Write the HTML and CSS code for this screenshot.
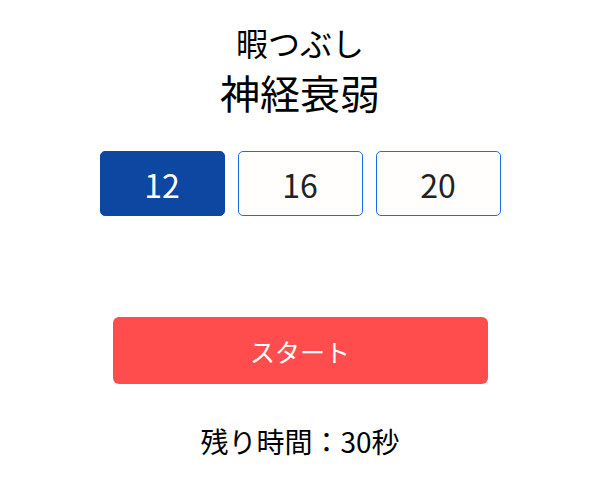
FILE: index.html
```html
<!DOCTYPE html>
<html lang="ja">
<head>
<meta charset="utf-8">
<link rel="stylesheet" href="styles.css">
</head>
<body>
<main class="app">
  <div class="subtitle">暇つぶし</div>
  <h1 class="title">神経衰弱</h1>
  <div class="sizes">
    <button class="size active">12</button>
    <button class="size">16</button>
    <button class="size">20</button>
  </div>
  <button class="start">スタート</button>
  <div class="timer">残り時間：30秒</div>
</main>
</body>
</html>
```
FILE: styles.css
```css
* { box-sizing: border-box; }
html, body { margin: 0; background: #fff; }
body {
  font-family: "Noto Sans CJK JP", "Noto Sans", sans-serif;
  color: #000;
}
.app {
  display: flex;
  flex-direction: column;
  align-items: center;
  padding-top: 22px;
}
.subtitle {
  font-size: 32px;
  line-height: 40px;
}
.title {
  margin: 0;
  font-size: 40px;
  font-weight: 400;
  line-height: 50px;
  margin-top: 5px;
}
.sizes {
  display: flex;
  gap: 13px;
  margin-top: 34px;
}
.size {
  width: 125px;
  height: 65px;
  border: 1px solid #1a6ee6;
  border-radius: 5px;
  background: #fffefc;
  color: #222;
  font-family: inherit;
  font-size: 32px;
  padding: 0;
}
.size.active {
  background: #0d47a1;
  border-color: #0d47a1;
  color: #fff;
}
.start {
  margin-top: 101px;
  width: 375px;
  height: 67px;
  border: none;
  border-radius: 6px;
  background: #ff4d4d;
  color: #fff;
  font-family: inherit;
  font-size: 25px;
  padding: 0;
}
.timer {
  margin-top: 37px;
  font-size: 28px;
  line-height: 40px;
}
```
